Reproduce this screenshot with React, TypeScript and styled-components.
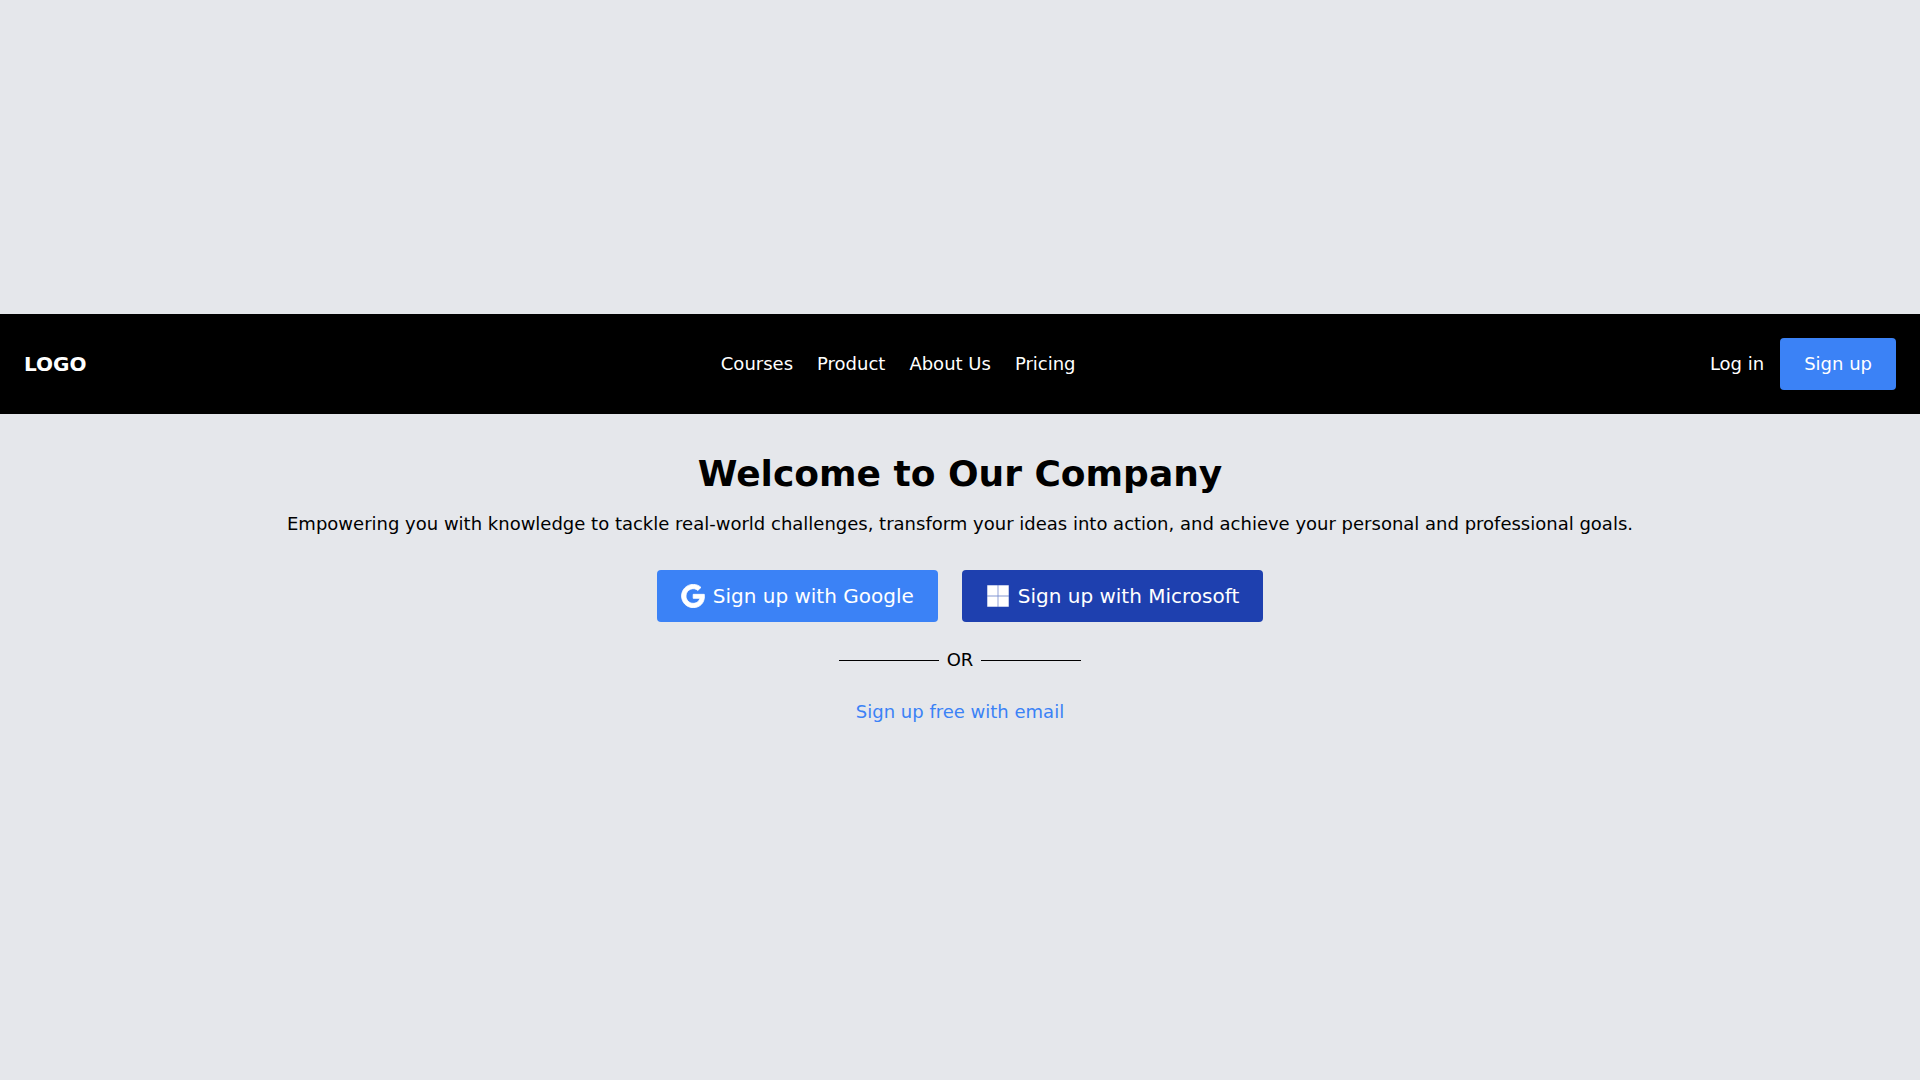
import React from "react";
import styled, { createGlobalStyle } from "styled-components";
import { FaGoogle, FaMicrosoft } from "react-icons/fa";

const Global = createGlobalStyle`
  * { box-sizing: border-box; }
  html, body { margin: 0; padding: 0; }
  body { font-family: "DejaVu Sans", sans-serif; background: #e5e7eb; }
`;

const Page = styled.div`
  min-height: 1080px;
  display: flex;
  flex-direction: column;
  justify-content: center;
`;

const NavBar = styled.nav`
  height: 100px;
  background: #000;
  color: #fff;
  display: flex;
  align-items: center;
  justify-content: space-between;
  padding: 0 24px;
`;

const Logo = styled.div`
  font-size: 20px;
  line-height: 28px;
  font-weight: 700;
`;

const Links = styled.div`
  display: flex;
  gap: 24px;
`;

const NavLink = styled.a`
  font-size: 18px;
  line-height: 28px;
  color: #fff;
`;

const Auth = styled.div`
  display: flex;
  align-items: center;
  gap: 16px;
`;

const SmallButton = styled.button`
  height: 52px;
  padding: 0 24px;
  border: none;
  border-radius: 4px;
  background: #3b82f6;
  color: #fff;
  font: 18px/28px "DejaVu Sans", sans-serif;
`;

const Hero = styled.main`
  display: flex;
  flex-direction: column;
  align-items: center;
  padding: 40px 0;
`;

const Title = styled.h1`
  margin: 0;
  font-size: 36px;
  line-height: 40px;
  font-weight: 700;
  color: #000;
`;

const Lead = styled.p`
  margin: 16px 0 0;
  font-size: 18px;
  line-height: 28px;
  color: #000;
`;

const Buttons = styled.div`
  display: flex;
  gap: 24px;
  margin-top: 32px;
`;

const SocialButton = styled.button<{ $dark?: boolean }>`
  height: 52px;
  padding: 0 24px;
  display: flex;
  align-items: center;
  gap: 8px;
  border: none;
  border-radius: 4px;
  background: ${(p) => (p.$dark ? "#1e40af" : "#3b82f6")};
  color: #fff;
  font: 20px/28px "DejaVu Sans", sans-serif;
  svg { width: 24px; height: 24px; stroke-width: 10; }
`;

const GoogleIcon = styled(FaGoogle)`
  && { stroke-width: 18; }
`;

const Divider = styled.div`
  display: flex;
  align-items: center;
  gap: 8px;
  margin-top: 24px;
  font-size: 18px;
  line-height: 28px;
  color: #000;
`;

const Rule = styled.span`
  width: 100px;
  height: 1px;
  background: #000;
`;

const EmailLink = styled.a`
  margin-top: 24px;
  font-size: 18px;
  line-height: 28px;
  color: #3b82f6;
`;

export default function App() {
  return (
    <Page>
      <Global />
      <NavBar>
        <Logo>LOGO</Logo>
        <Links>
          <NavLink>Courses</NavLink>
          <NavLink>Product</NavLink>
          <NavLink>About Us</NavLink>
          <NavLink>Pricing</NavLink>
        </Links>
        <Auth>
          <NavLink>Log in</NavLink>
          <SmallButton>Sign up</SmallButton>
        </Auth>
      </NavBar>
      <Hero>
        <Title>Welcome to Our Company</Title>
        <Lead>
          Empowering you with knowledge to tackle real-world challenges, transform your ideas into action, and achieve
          your personal and professional goals.
        </Lead>
        <Buttons>
          <SocialButton>
            <GoogleIcon />
            Sign up with Google
          </SocialButton>
          <SocialButton $dark>
            <FaMicrosoft />
            Sign up with Microsoft
          </SocialButton>
        </Buttons>
        <Divider>
          <Rule />
          OR
          <Rule />
        </Divider>
        <EmailLink>Sign up free with email</EmailLink>
      </Hero>
    </Page>
  );
}
